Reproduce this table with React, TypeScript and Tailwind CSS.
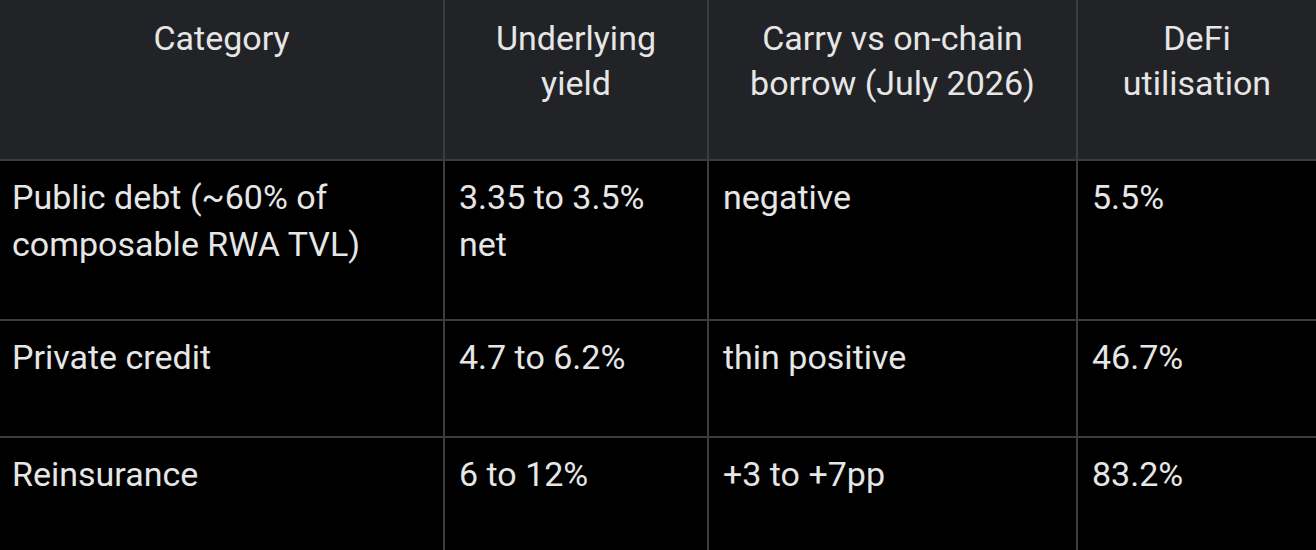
const headers = ["Category", "Underlying yield", "Carry vs on-chain borrow (July 2026)", "DeFi utilisation"];

const rows = [
  { h: "h-[160px]", cells: ["Public debt (~60% of composable RWA TVL)", "3.35 to 3.5% net", "negative", "5.5%"] },
  { h: "h-[117px]", cells: ["Private credit", "4.7 to 6.2%", "thin positive", "46.7%"] },
  { h: "h-[120px]", cells: ["Reinsurance", "6 to 12%", "+3 to +7pp", "83.2%"] },
];

const widths = ["w-[443px]", "w-[264px]", "w-[369px]", "w-[240px]"];

export default function App() {
  return (
    <div className="w-[1316px] h-[550px] overflow-hidden bg-black text-[#e6e6e6] font-['Roboto',sans-serif]">
      <table className="table-fixed border-separate border-spacing-0 w-[1316px] text-[34px] leading-[47px]">
        <colgroup>
          {widths.map((w, i) => (
            <col key={i} className={w} />
          ))}
        </colgroup>
        <thead>
          <tr className="h-[161px] bg-[#222327]">
            {headers.map((t, i) => (
              <th
                key={t}
                className={`align-top text-center font-normal leading-[45px] px-3 pt-[16px] border-b-2 border-[#3c3c3f] ${i > 0 ? "border-l-2" : ""}`}
              >
                {t}
              </th>
            ))}
          </tr>
        </thead>
        <tbody>
          {rows.map((r, ri) => (
            <tr key={ri} className={r.h}>
              {r.cells.map((c, i) => (
                <td
                  key={i}
                  className={`align-top text-left pr-3 pt-[13px] border-[#3c3c3f] ${ri < rows.length - 1 ? "border-b-2" : ""} ${i > 0 ? "border-l-2 pl-[14px]" : "pl-3"}`}
                >
                  {c}
                </td>
              ))}
            </tr>
          ))}
        </tbody>
      </table>
    </div>
  );
}
